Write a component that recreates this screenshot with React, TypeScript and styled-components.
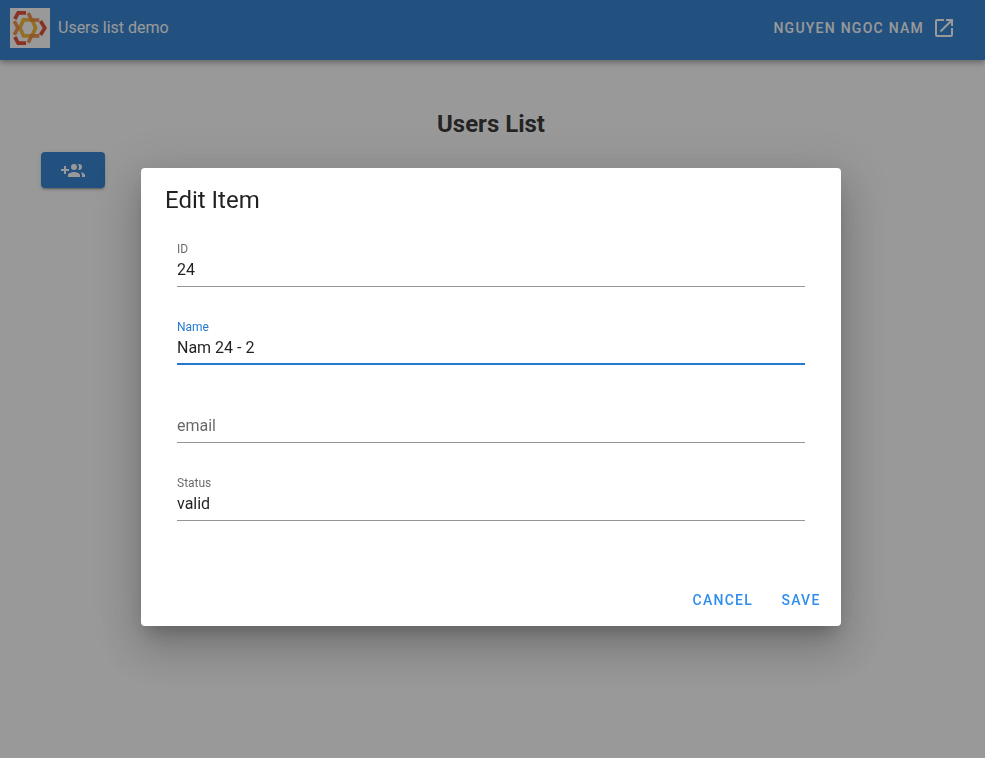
import React from "react";
import styled, { createGlobalStyle } from "styled-components";

const GlobalStyle = createGlobalStyle`
  *, *::before, *::after { box-sizing: border-box; }
  html, body { margin: 0; padding: 0; height: 100%; overflow: hidden; }
  body {
    font-family: Roboto, "Liberation Sans", sans-serif;
    font-size: 16px;
    line-height: 1.5;
    color: rgba(0, 0, 0, 0.87);
    background: #fff;
  }
`;

const Page = styled.div`
  height: 100vh;
  display: flex;
  flex-direction: column;
`;

const AppBar = styled.header`
  flex: none;
  height: 60px;
  padding: 0 13px 4px 10px;
  display: flex;
  align-items: center;
  justify-content: space-between;
  color: #fff;
  background: #257acf;
  box-shadow: 0 2px 4px -1px rgba(0, 0, 0, 0.2), 0 4px 5px 0 rgba(0, 0, 0, 0.14),
    0 1px 10px 0 rgba(0, 0, 0, 0.12);
`;

const Brand = styled.div`
  display: flex;
  align-items: center;
  gap: 8px;
`;

const Logo = styled.svg`
  display: block;
  width: 40px;
  height: 40px;
  background: #fff;
`;

const BarButton = styled.button`
  height: 36px;
  padding: 0 16px;
  display: flex;
  align-items: center;
  gap: 8px;
  border: 0;
  color: inherit;
  background: transparent;
  font: 500 14px Roboto, sans-serif;
  letter-spacing: 1.25px;
  text-transform: uppercase;
`;

const Content = styled.main`
  width: 982px;
  padding: 46px 41px 0;
`;

const PageTitle = styled.h2`
  margin: 0 0 10px;
  font-size: 24px;
  line-height: 36px;
  font-weight: 700;
  text-align: center;
`;

const AddButton = styled.button`
  width: 64px;
  height: 36px;
  padding: 1px 0 0;
  display: flex;
  align-items: center;
  justify-content: center;
  border: 0;
  border-radius: 4px;
  color: #fff;
  background: #257acf;
  box-shadow: 0 3px 1px -2px rgba(0, 0, 0, 0.2), 0 2px 2px 0 rgba(0, 0, 0, 0.14),
    0 1px 5px 0 rgba(0, 0, 0, 0.12);
`;

const Icon = styled.svg`
  display: block;
  width: 24px;
  height: 24px;
  fill: currentColor;
`;

const Scrim = styled.div`
  position: fixed;
  inset: 0;
  padding: 168px 0 0 141px;
  background: rgba(33, 33, 33, 0.46);
`;

const Dialog = styled.section`
  width: 700px;
  height: 458px;
  display: flex;
  flex-direction: column;
  border-radius: 4px;
  background: #fff;
  box-shadow: 0 11px 15px -7px rgba(0, 0, 0, 0.2), 0 24px 38px 3px rgba(0, 0, 0, 0.14),
    0 9px 46px 8px rgba(0, 0, 0, 0.12);
`;

const DialogTitle = styled.h3`
  margin: 0;
  padding: 16px 24px 10px;
  font-size: 24px;
  line-height: 32px;
  font-weight: 400;
`;

const Fields = styled.div`
  flex: 1;
  padding: 5px 36px 0;
`;

const Field = styled.label<{ $focused?: boolean }>`
  height: 78px;
  display: block;
  color: ${(p) => (p.$focused ? "#257acf" : "rgba(0, 0, 0, 0.6)")};
`;

const Caption = styled.span`
  display: block;
  height: 23px;
  padding-top: 8px;
  font-size: 12px;
  line-height: 20px;
`;

const Input = styled.input<{ $focused?: boolean }>`
  display: block;
  width: 100%;
  height: 33px;
  padding: 0 0 ${(p) => (p.$focused ? 0 : 1)}px;
  border: 0;
  border-radius: 0;
  border-bottom: ${(p) => (p.$focused ? "2px solid #257acf" : "1px solid #949494")};
  outline: 0;
  background: transparent;
  color: rgba(0, 0, 0, 0.87);
  font: 400 16px/20px Roboto, sans-serif;

  &::placeholder {
    color: rgba(0, 0, 0, 0.6);
    opacity: 1;
  }
`;

const Actions = styled.footer`
  padding: 8px;
  display: flex;
  justify-content: flex-end;
  gap: 8px;
`;

const TextButton = styled.button`
  min-width: 64px;
  height: 36px;
  padding: 0 8px;
  border: 0;
  color: #2f8eeb;
  background: transparent;
  font: 500 14px Roboto, sans-serif;
  letter-spacing: 1.25px;
  text-transform: uppercase;
`;

const fields = [
  { label: "ID", value: "24" },
  { label: "Name", value: "Nam 24 - 2", focused: true },
  { label: "email", value: "" },
  { label: "Status", value: "valid" },
];

function HexLogo() {
  return (
    <Logo viewBox="0 0 40 40" fill="none" strokeWidth="3.7">
      <g stroke="#df4129">
        <path d="M16 4.8H8.2L4.8 11" />
        <path d="M4.8 29L8.2 35.2H16" />
        <path d="M30.5 13L34.8 20L30.5 27" />
      </g>
      <path stroke="#f0b429" d="M13.5 11.8H22L25.6 19.8L22 27.8H13.5L9.9 19.8Z" />
      <g stroke="#ef7d2c" strokeOpacity="0.9">
        <path d="M18.2 5L21.6 12H29.3" />
        <path d="M18.2 34.8L21.6 27.8H29.3" />
        <path d="M4.3 13.2L7.9 20L4.3 26.8" />
      </g>
    </Logo>
  );
}

export default function App() {
  return (
    <>
      <GlobalStyle />
      <Page>
        <AppBar>
          <Brand>
            <HexLogo />
            <span>Users list demo</span>
          </Brand>
          <BarButton>
            <span>Nguyen Ngoc Nam</span>
            <Icon viewBox="0 0 24 24">
              <path d="M14,3V5H17.59L7.76,14.83L9.17,16.24L19,6.41V10H21V3M19,19H5V5H12V3H5C3.89,3 3,3.9 3,5V19A2,2 0 0,0 5,21H19A2,2 0 0,0 21,19V12H19V19Z" />
            </Icon>
          </BarButton>
        </AppBar>
        <Content>
          <PageTitle>Users List</PageTitle>
          <AddButton aria-label="Add user">
            <Icon viewBox="0 0 24 24">
              <path d="M13,13C11,13 7,14 7,16V18H19V16C19,14 15,13 13,13M19.62,13.16C20.45,13.88 21,14.82 21,16V18H24V16C24,14.46 21.63,13.5 19.62,13.16M13,11A3,3 0 0,0 16,8A3,3 0 0,0 13,5A3,3 0 0,0 10,8A3,3 0 0,0 13,11M18,11A3,3 0 0,0 21,8A3,3 0 0,0 18,5C17.68,5 17.37,5.05 17.08,5.14C17.65,5.95 18,6.94 18,8C18,9.06 17.63,10.04 17.08,10.85C17.37,10.95 17.68,11 18,11M8,10H5V7H3V10H0V12H3V15H5V12H8V10Z" />
            </Icon>
          </AddButton>
        </Content>
      </Page>
      <Scrim>
        <Dialog role="dialog" aria-label="Edit Item">
          <DialogTitle>Edit Item</DialogTitle>
          <Fields>
            {fields.map((f) => (
              <Field key={f.label} $focused={f.focused}>
                <Caption>{f.value ? f.label : ""}</Caption>
                <Input
                  $focused={f.focused}
                  defaultValue={f.value}
                  placeholder={f.value ? undefined : f.label}
                />
              </Field>
            ))}
          </Fields>
          <Actions>
            <TextButton>Cancel</TextButton>
            <TextButton>Save</TextButton>
          </Actions>
        </Dialog>
      </Scrim>
    </>
  );
}
